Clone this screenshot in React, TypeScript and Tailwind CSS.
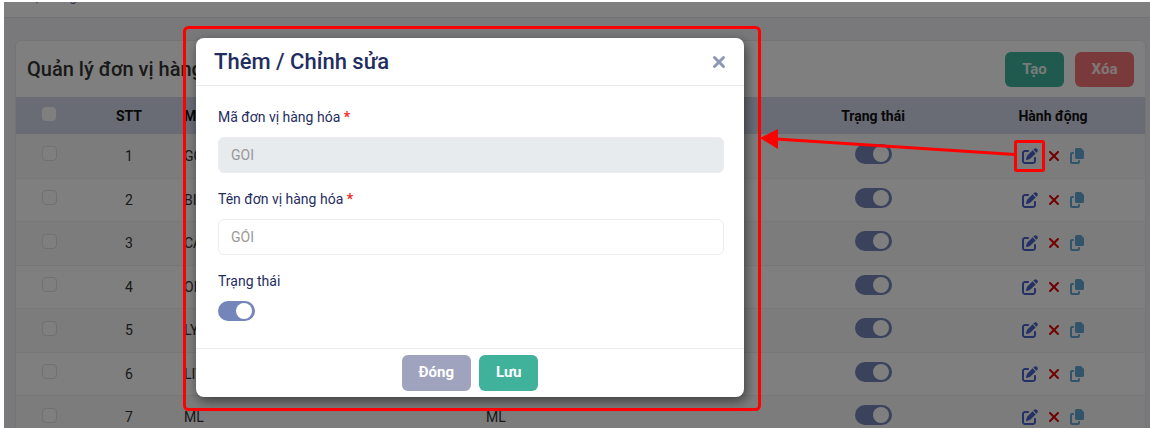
import { useState } from "react";
import { FaXmark } from "react-icons/fa6";

type Unit = { id: number; code: string; name: string };

const units: Unit[] = [
  { id: 1, code: "GOI", name: "GÓI" },
  { id: 2, code: "BICH", name: "BỊCH" },
  { id: 3, code: "CAI", name: "CÁI" },
  { id: 4, code: "ONG", name: "ỐNG" },
  { id: 5, code: "LY", name: "LY" },
  { id: 6, code: "LIT", name: "LÍT" },
  { id: 7, code: "ML", name: "ML" },
];

function Toggle({ id, label }: { id?: string; label?: string }) {
  return (
    <span className="relative inline-block h-5 w-[37px] align-top">
      <input
        id={id}
        type="checkbox"
        defaultChecked
        aria-label={label}
        className="peer h-5 w-[37px] cursor-pointer appearance-none rounded-full bg-gray-300 checked:bg-[#7485b9]"
      />
      <span className="pointer-events-none absolute top-[2px] left-[3px] size-4 rounded-full bg-white peer-checked:left-[18px]" />
    </span>
  );
}

function EditIcon() {
  return (
    <svg width="16" height="16" viewBox="0 0 512 512" fill="currentColor" aria-hidden>
      <path d="M471.6 21.7c-21.9-21.9-57.3-21.9-79.2 0L362.3 51.7l97.9 97.9 30.1-30.1c21.9-21.9 21.9-57.3 0-79.2L471.6 21.7zm-299.2 220c-6.1 6.1-10.8 13.6-13.5 21.9l-29.6 88.8c-2.9 8.6-.6 18.1 5.8 24.6s15.9 8.7 24.6 5.8l88.8-29.6c8.2-2.7 15.7-7.4 21.9-13.5L437.7 172.3 339.7 74.3 172.4 241.7zM96 64C43 64 0 107 0 160V416c0 53 43 96 96 96H352c53 0 96-43 96-96V320c0-17.7-14.3-32-32-32s-32 14.3-32 32v96c0 17.7-14.3 32-32 32H96c-17.7 0-32-14.3-32-32V160c0-17.7 14.3-32 32-32h96c17.7 0 32-14.3 32-32s-14.3-32-32-32H96z" />
    </svg>
  );
}

function CopyIcon() {
  return (
    <svg width="14" height="16" viewBox="0 0 14 16" aria-hidden>
      <path d="M6.5 0H11L14 3V9.6A1.5 1.5 0 0 1 12.5 11.1H6.5A1.5 1.5 0 0 1 5 9.6V1.5A1.5 1.5 0 0 1 6.5 0Z" fill="currentColor" />
      <path d="M3.8 4.9H2A1 1 0 0 0 1 5.9V14A1 1 0 0 0 2 15H8A1 1 0 0 0 9 14V12.3" fill="none" stroke="currentColor" strokeWidth="2" />
    </svg>
  );
}

function Field({ id, label, value, disabled }: { id: string; label: string; value: string; disabled?: boolean }) {
  return (
    <div className="mb-4">
      <label htmlFor={id} className="mb-2.5 block text-sm leading-5">
        {label} <span className="font-bold text-[#f32b1f]">*</span>
      </label>
      <input
        id={id}
        defaultValue={value}
        disabled={disabled}
        className="block h-9 w-full rounded-md border border-[#ebedf0] bg-white px-3 text-sm text-[#999] disabled:bg-[#e8ebee]"
      />
    </div>
  );
}

function UnitDialog({ onClose }: { onClose: () => void }) {
  return (
    <form
      role="dialog"
      aria-label="Thêm / Chỉnh sửa"
      onSubmit={(e) => e.preventDefault()}
      className="mt-9 ml-48 w-[548px] self-start rounded-lg bg-white text-[#1f2d5f] shadow-[2px_4px_12px_rgba(0,0,0,0.5)]"
    >
      <div className="flex h-12 items-center justify-between border-b border-[#e9ebee] px-[18px]">
        <h2 className="text-[22px] font-medium">Thêm / Chỉnh sửa</h2>
        <button type="button" aria-label="Đóng hộp thoại" onClick={onClose} className="text-[#8e97b5]">
          <svg width="14" height="14" viewBox="0 0 14 14" fill="none" aria-hidden>
            <path d="M2.5 2.5l9 9M11.5 2.5l-9 9" stroke="currentColor" strokeWidth="3" strokeLinecap="round" />
          </svg>
        </button>
      </div>
      <div className="border-b border-[#e9ebee] pt-[21px] pr-5 pb-[27px] pl-[22px]">
        <Field id="code" label="Mã đơn vị hàng hóa" value="GOI" disabled />
        <Field id="name" label="Tên đơn vị hàng hóa" value="GÓI" />
        <label htmlFor="status" className="mb-2.5 block text-sm leading-5">
          Trạng thái
        </label>
        <div className="flex h-5">
          <Toggle id="status" />
        </div>
      </div>
      <div className="flex h-12 items-center justify-center gap-2 text-[15px] font-bold text-white">
        <button type="button" onClick={onClose} className="h-9 rounded-md bg-[#9fa3bd] px-[17px]">
          Đóng
        </button>
        <button type="submit" className="h-9 rounded-md bg-[#40b29b] px-[17px]">
          Lưu
        </button>
      </div>
    </form>
  );
}

// Red callout: frame round the dialog, arrow from the edit button of the first row
function Callout() {
  return (
    <svg width="1150" height="428" className="pointer-events-none absolute top-0 left-0" fill="none" stroke="red" strokeWidth="3" aria-hidden>
      <rect x="184.5" y="27.5" width="575" height="382" rx="4" />
      <rect x="1015.5" y="141.5" width="28" height="29" rx="1" />
      <path d="M1015 154.5L776 139" />
      <path d="M760 138L778 129V149Z" fill="red" stroke="none" />
    </svg>
  );
}

export default function App() {
  const [open, setOpen] = useState(true);

  return (
    <div className="relative h-screen overflow-hidden bg-white pt-0.5 pl-1 font-[Roboto,sans-serif] text-sm text-[#333]">
      <div className="relative h-full overflow-hidden bg-[#f2f2f7]">
        <header className="flex h-4 items-start border-b border-[#e4e4ea] bg-white px-5">
          <span className="-mt-[13px] text-[13px] leading-4 text-[#5f6fae]">Hệ thống</span>
        </header>
        <main className="mt-[22px] mr-1 ml-[11px] rounded-md border border-[#e9e9ee] bg-white">
          <div className="flex h-14 items-center justify-between px-[11px]">
            <h1 className="text-xl font-medium">Quản lý đơn vị hàng hóa</h1>
            <div className="flex gap-[11px] text-[15px] font-bold text-white/90">
              <button type="button" className="h-[35px] w-[59px] rounded-md bg-[#40b29b] pt-0.5">
                Tạo
              </button>
              <button type="button" className="h-[35px] w-[59px] rounded-md bg-[#f57576] pt-0.5">
                Xóa
              </button>
            </div>
          </div>
          <table className="w-full table-fixed">
            <thead className="h-[37px] bg-[#d3d7ea] text-[#111]">
              <tr>
                <th className="w-[66px]">
                  <input type="checkbox" aria-label="Chọn tất cả" className="mx-auto mb-1 block size-3.5 appearance-none rounded-sm bg-white" />
                </th>
                <th className="w-[94px] font-bold">STT</th>
                <th className="w-[302px] px-2 text-left font-bold">Mã</th>
                <th className="px-2 text-left font-bold">Tên</th>
                <th className="w-[176px] font-bold">Trạng thái</th>
                <th className="w-[184px] font-bold">Hành động</th>
              </tr>
            </thead>
            <tbody className="text-center">
              {units.map((u) => (
                <tr key={u.id} className="h-[43px] border-b border-[#eeeeee] odd:h-[44px] odd:bg-[#f8f8f8]">
                  <td>
                    <input
                      type="checkbox"
                      aria-label={`Chọn ${u.name}`}
                      className="mx-auto mb-1 block size-[15px] appearance-none rounded border border-[#e0e0e0] bg-white"
                    />
                  </td>
                  <td>{u.id}</td>
                  <td className="px-2 text-left">{u.code}</td>
                  <td className="px-2 text-left">{u.name}</td>
                  <td>
                    <div className="mb-1 flex h-5 justify-center">
                      <Toggle label={`Trạng thái ${u.name}`} />
                    </div>
                  </td>
                  <td>
                    <div className="flex items-center justify-center gap-2">
                      <button type="button" aria-label="Sửa" onClick={() => setOpen(true)} className="text-[#4a62c8]">
                        <EditIcon />
                      </button>
                      <button type="button" aria-label="Xóa dòng" className="text-[#e60000]">
                        <FaXmark size={16} />
                      </button>
                      <button type="button" aria-label="Sao chép" className="text-[#62a9d6]">
                        <CopyIcon />
                      </button>
                    </div>
                  </td>
                </tr>
              ))}
            </tbody>
          </table>
        </main>
        {open ? (
          <div className="absolute inset-0 flex bg-black/50">
            <UnitDialog onClose={() => setOpen(false)} />
          </div>
        ) : null}
      </div>
      <Callout />
    </div>
  );
}
